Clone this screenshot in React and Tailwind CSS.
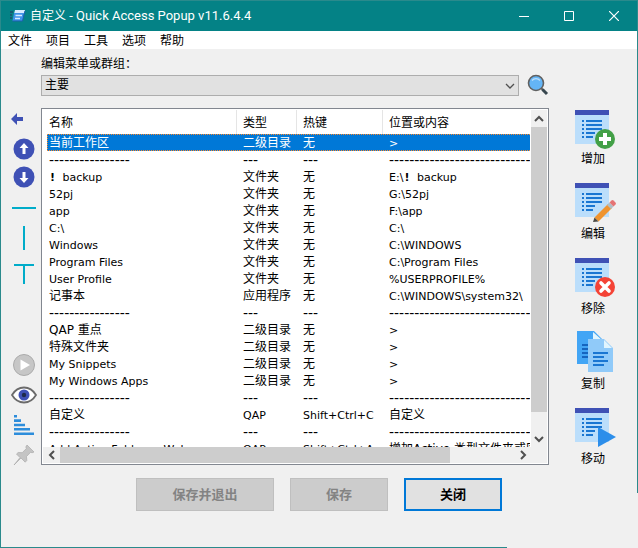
import React from "react";

const MENUS = ["文件", "项目", "工具", "选项", "帮助"];

const Mark = () => <b className="mr-1 pl-px">!</b>;

const DASH = { name: "-".repeat(16), type: "---", key: "---", place: "-".repeat(28), dash: true };

const ROWS = [
  { name: "当前工作区", type: "二级目录", key: "无", place: ">", selected: true },
  DASH,
  { name: <><Mark /> backup</>, type: "文件夹", key: "无", place: <>E:\<Mark /> backup</> },
  { name: "52pj", type: "文件夹", key: "无", place: "G:\\52pj" },
  { name: "app", type: "文件夹", key: "无", place: "F:\\app" },
  { name: "C:\\", type: "文件夹", key: "无", place: "C:\\" },
  { name: "Windows", type: "文件夹", key: "无", place: "C:\\WINDOWS" },
  { name: "Program Files", type: "文件夹", key: "无", place: "C:\\Program Files" },
  { name: "User Profile", type: "文件夹", key: "无", place: "%USERPROFILE%" },
  { name: "记事本", type: "应用程序", key: "无", place: "C:\\WINDOWS\\system32\\" },
  DASH,
  { name: "QAP 重点", type: "二级目录", key: "无", place: ">" },
  { name: "特殊文件夹", type: "二级目录", key: "无", place: ">" },
  { name: "My Snippets", type: "二级目录", key: "无", place: ">" },
  { name: "My Windows Apps", type: "二级目录", key: "无", place: ">" },
  DASH,
  { name: "自定义", type: "QAP", key: "Shift+Ctrl+C", place: "自定义" },
  DASH,
  { name: "Add Active Folder or Web", type: "QAP", key: "Shift+Ctrl+A", place: "增加Active 类型文件夹或区" },
];

function AppIcon() {
  return (
    <svg width="16" height="16" viewBox="0 0 16 16">
      <path d="M0 4h3M0 7h2M0 10h2" stroke="#1d4f6b" strokeWidth="1.500" />
      <path d="M5 2h10l-1 4H4z" fill="#d7ecff" />
      <path d="M4 5h10l-1.500 8H2.500z" fill="#3f93ea" />
      <path d="M5.500 7.500h6.500M5 10.500h5" stroke="#d5eaff" strokeWidth="1.400" />
      <path d="M2.500 13h10L15 3" fill="none" stroke="#1c5fae" />
    </svg>
  );
}

function SearchIcon() {
  return (
    <svg width="22" height="22" viewBox="0 0 22 22">
      <path d="M14 14l2 2" stroke="#616161" strokeWidth="2" />
      <path d="M15.5 15.5l4.5 4.5" stroke="#37474f" strokeWidth="3" />
      <circle cx="9" cy="9" r="7.5" fill="#64b5f6" stroke="#616161" strokeWidth="1.6" />
      <path d="M5 6.5c2-2.600 6-2.600 8 0" fill="none" stroke="#bbdefb" strokeWidth="1.3" />
    </svg>
  );
}

function Chevron({ d }) {
  return (
    <svg width="10" height="10" viewBox="0 0 10 10" fill="none" stroke="#505050" strokeWidth="2">
      <path d={d} />
    </svg>
  );
}

function SideButton({ label, className = "", children }) {
  return (
    <button aria-label={label} className={"flex w-[26px] items-center justify-center " + className}>
      {children}
    </button>
  );
}

function Sidebar() {
  return (
    <nav className="flex w-10 flex-col justify-between pl-[10px] pt-[63px]">
      <div className="flex flex-col">
        <SideButton label="返回" className="h-[14px]">
          <svg width="26" height="14" viewBox="0 0 26 14">
            <path d="M0 7l6-6v4h6v4H6v4z" fill="#3f51b5" />
          </svg>
        </SideButton>
        <SideButton label="上移" className="mt-3 h-[22px]">
          <svg width="22" height="22" viewBox="0 0 22 22">
            <circle cx="11" cy="11" r="10.5" fill="#3f51b5" />
            <path d="M11 5l4.500 5H12.500v6h-3v-6H6.500z" fill="#fff" />
          </svg>
        </SideButton>
        <SideButton label="下移" className="mt-[6px] h-[22px]">
          <svg width="22" height="22" viewBox="0 0 22 22">
            <circle cx="11" cy="11" r="10.5" fill="#3f51b5" />
            <path d="M11 17l4.500-5H12.500V6h-3v6H6.500z" fill="#fff" />
          </svg>
        </SideButton>
        <SideButton label="分隔线" className="mt-3 h-4">
          <svg width="24" height="2" viewBox="0 0 24 2">
            <path d="M0 1h24" stroke="#00acc9" strokeWidth="2" />
          </svg>
        </SideButton>
        <SideButton label="分栏" className="mt-[10px] h-6">
          <svg width="2" height="24" viewBox="0 0 2 24">
            <path d="M1 0v24" stroke="#00acc9" strokeWidth="2" />
          </svg>
        </SideButton>
        <SideButton label="文本分隔" className="mt-[14px] h-5">
          <svg width="20" height="20" viewBox="0 0 20 20">
            <path d="M0 1h20M10 1v19" stroke="#00acc9" strokeWidth="2" />
          </svg>
        </SideButton>
      </div>
      <div className="flex flex-col">
        <SideButton label="运行" className="h-[22px]">
          <svg width="22" height="22" viewBox="0 0 22 22">
            <circle cx="11" cy="11" r="10.500" fill="#c6c6c6" stroke="#aaa" />
            <path d="M7.500 5.500v11l9.500-5.500z" fill="#fff" />
          </svg>
        </SideButton>
        <SideButton label="显示" className="mt-[10px] h-[18px]">
          <svg width="26" height="18" viewBox="0 0 26 18">
            <path d="M1 9C7-1 19-1 25 9C19 19 7 19 1 9z" fill="#fff" stroke="#6b6b6b" strokeWidth="1.800" />
            <circle cx="13" cy="9" r="5.500" fill="#3f51b5" />
            <circle cx="13" cy="9" r="2.200" fill="#1e2a4a" />
          </svg>
        </SideButton>
        <SideButton label="排序" className="mt-[11px] h-5">
          <svg width="20" height="20" viewBox="0 0 20 20">
            <path d="M0 1.300h3M0 5.600h7M0 10h11M0 14.300h16M0 18.700h20" stroke="#2d8ddb" strokeWidth="2.600" />
          </svg>
        </SideButton>
        <SideButton label="置顶" className="mt-[10px] h-5">
          <svg width="22" height="20" viewBox="0 0 22 20">
            <path d="M14 0l7 7-2 .8-1.300-.6-4.200 4.300.3 4-1.600 1.700-4.200-4.200L1 20l6-7.400L3.500 9l1.700-1.500 4 .2 4.200-4.200L12.800 2z" fill="#c4c4c4" stroke="#aaa" strokeWidth=".7" />
          </svg>
        </SideButton>
      </div>
    </nav>
  );
}

function ListPage() {
  return (
    <>
      <rect width="34" height="34" fill="#bbdefb" />
      <rect width="34" height="5" fill="#3f51b5" />
      <path
        d="M7 11h2M11 11h16M7 15h2M11 15h16M7 19h2M11 19h16M7 23h2M11 23h9M7 27h2M11 27h7"
        stroke="#1976d2"
        strokeWidth="2"
      />
    </>
  );
}

const ACTIONS = [
  {
    label: "增加",
    art: (
      <g transform="translate(0 2)">
        <ListPage />
        <circle cx="30" cy="29" r="10" fill="#43a047" />
        <path d="M30 23v12M24 29h12" stroke="#fff" strokeWidth="4" />
      </g>
    ),
  },
  {
    label: "编辑",
    art: (
      <g>
        <ListPage />
        <path d="M19.500 34.500L33 21l4 4L23.500 38.500z" fill="#ef9430" />
        <path d="M19.500 34.500l4 4L18 39z" fill="#4b4a45" />
        <path d="M32 22l2.500-2.500 4 4L36 26z" fill="#b0bec5" />
        <path d="M34.500 19.500l2-2q1-1 2 0l2 2q1 1 0 2l-2 2z" fill="#e57373" />
      </g>
    ),
  },
  {
    label: "移除",
    art: (
      <g>
        <ListPage />
        <circle cx="30" cy="29" r="10" fill="#f44336" />
        <path d="M26 25l8 8M34 25l-8 8" stroke="#fff" strokeWidth="3.600" strokeLinecap="round" />
      </g>
    ),
  },
  {
    label: "复制",
    art: (
      <g transform="translate(2 -2)">
        <path d="M0 0h17l8 8v25H0z" fill="#42a5f5" />
        <path d="M16 1v8h9z" fill="#e1f5fe" />
        <path d="M5 14h8M5 18h8M5 22h8M5 26h8" stroke="#1565c0" strokeWidth="2" />
        <path d="M11 8h16l9 9v24H11z" fill="#90caf9" />
        <path d="M27 9v8h8z" fill="#e1f5fe" />
        <path d="M16 22h15M16 26h11M16 30h15M16 34h11" stroke="#1976d2" strokeWidth="2" />
      </g>
    ),
  },
  {
    label: "移动",
    art: (
      <g>
        <ListPage />
        <path d="M23 19v20l18-10z" fill="#2c8eea" />
      </g>
    ),
  },
];

function Actions() {
  return (
    <aside className="flex w-[88px] flex-col pl-[26px] pt-[59px]">
      {ACTIONS.map((a) => (
        <button key={a.label} className="flex h-[75px] w-9 shrink-0 flex-col items-center">
          <svg width="36" height="40" viewBox="0 0 36 40" className="shrink-0 overflow-visible">
            {a.art}
          </svg>
          <span className="mt-[3px] leading-4">{a.label}</span>
        </button>
      ))}
    </aside>
  );
}

const CJK = /[\u4e00-\u9fff]/;

function Cell({ pad, children }) {
  const size = typeof children === "string" && CJK.test(children) ? "text-xs leading-[15px]" : "leading-[15px]";
  return <td className={"overflow-hidden pb-0 pr-0 pt-[2px] " + pad + " " + size}>{children}</td>;
}

function ItemTable() {
  return (
    <div className="mr-px min-h-0 min-w-0 overflow-hidden pl-1">
      <table className="w-[calc(100%+40px)] table-fixed border-separate border-spacing-0 whitespace-nowrap text-left">
        <colgroup>
          <col className="w-[190px]" />
          <col className="w-[60px]" />
          <col className="w-[86px]" />
          <col />
        </colgroup>
        <thead className="text-xs">
          <tr className="h-6">
            <th className="border-r border-[#e5e5e5] p-0 pl-[2px] pt-[2px] font-normal">名称</th>
            <th className="border-r border-[#e5e5e5] p-0 pl-[6px] pt-[2px] font-normal">类型</th>
            <th className="border-r border-[#e5e5e5] p-0 pl-[6px] pt-[2px] font-normal">热键</th>
            <th className="p-0 pl-[6px] pt-[2px] font-normal">位置或内容</th>
          </tr>
        </thead>
        <tbody>
          {ROWS.map((r, i) => (
            <tr
              key={i}
              className={
                r.selected
                  ? "h-[17px] bg-[#0078d7] text-white outline outline-1 outline-dotted -outline-offset-1 outline-[#ff8728]"
                  : r.dash
                  ? "h-[17px] text-sm"
                  : "h-[17px]"
              }
            >
              <Cell pad="pl-[2px]">{r.name}</Cell>
              <Cell pad="pl-[6px]">{r.type}</Cell>
              <Cell pad="pl-[6px]">{r.key}</Cell>
              <Cell pad="pl-[6px]">{r.place}</Cell>
            </tr>
          ))}
        </tbody>
      </table>
    </div>
  );
}

function ListPanel() {
  return (
    <section className="mt-3 grid min-h-0 flex-1 grid-cols-[minmax(0,1fr)_16px] grid-rows-[minmax(0,1fr)_16px] border border-[#828790] bg-white p-px">
      <ItemTable />
      <div className="flex flex-col bg-[#f0f0f0]">
        <button aria-label="向上滚动" className="flex h-[17px] items-center justify-center">
          <Chevron d="M1 7l4-4 4 4" />
        </button>
        <div className="flex flex-1 flex-col">
          <div className="basis-[94%] bg-[#cdcdcd]" />
        </div>
        <button aria-label="向下滚动" className="flex h-[17px] items-center justify-center">
          <Chevron d="M1 3l4 4 4-4" />
        </button>
      </div>
      <div className="flex bg-[#f0f0f0]">
        <button aria-label="向左滚动" className="flex w-[17px] items-center justify-center">
          <Chevron d="M7 1L3 5l4 4" />
        </button>
        <div className="flex flex-1">
          <div className="basis-[86%] bg-[#cdcdcd]" />
        </div>
        <button aria-label="向右滚动" className="flex w-[17px] items-center justify-center">
          <Chevron d="M3 1l4 4-4 4" />
        </button>
      </div>
      <div className="bg-[#f0f0f0]" />
    </section>
  );
}

export default function App() {
  return (
    <div className="relative flex h-screen flex-col border border-[#2a8a8c] bg-[#f0f0f0] font-['DejaVu_Sans','Noto_Sans_CJK_SC',sans-serif] text-[11px] text-black">
      <header className="flex h-[30px] shrink-0 items-center bg-[#048286] pl-[9px] font-['Roboto','Noto_Sans_CJK_SC',sans-serif] text-white">
        <AppIcon />
        <h1 className="ml-1 flex-1 text-[13px]">
          <span className="text-xs">自定义</span> - Quick Access Popup v11.6.4.4
        </h1>
        <button aria-label="最小化" className="flex w-[45px] justify-center">
          <svg width="10" height="10" viewBox="0 0 10 10" stroke="#fff"><path d="M0 5.500h10" /></svg>
        </button>
        <button aria-label="最大化" className="flex w-[45px] justify-center">
          <svg width="10" height="10" viewBox="0 0 10 10" stroke="#fff" fill="none"><path d="M.5.5h9v9h-9z" /></svg>
        </button>
        <button aria-label="关闭窗口" className="flex w-[46px] justify-center">
          <svg width="10" height="10" viewBox="0 0 10 10" stroke="#fff" strokeWidth="1.200"><path d="M0 0l10 10M10 0L0 10" /></svg>
        </button>
      </header>
      <nav className="flex h-[18px] shrink-0 items-center gap-[14px] bg-white pl-[7px] text-xs">
        {MENUS.map((m) => (
          <button key={m} className="pt-[2px] leading-4">{m}</button>
        ))}
      </nav>
      <div className="flex min-h-0 flex-1 text-xs">
        <Sidebar />
        <main className="flex min-w-0 flex-1 flex-col pt-[7px] text-[11px]">
          <label htmlFor="menu" className="text-xs leading-4">编辑菜单或群组：</label>
          <div className="mt-[2px] flex items-center gap-2">
            <div className="relative flex-1">
              <select id="menu" className="block h-[21px] w-full appearance-none border border-[#adadad] bg-[#e1e1e1] px-[3px] text-xs leading-4">
                <option>主要</option>
              </select>
              <svg className="pointer-events-none absolute right-1 top-[6px]" width="10" height="10" viewBox="0 0 10 10" fill="none" stroke="#505050" strokeWidth="1.300">
                <path d="M1 3l4 4 4-4" />
              </svg>
            </div>
            <button aria-label="搜索"><SearchIcon /></button>
          </div>
          <ListPanel />
        </main>
        <Actions />
      </div>
      <footer className="flex h-[82px] shrink-0 justify-center gap-4 pt-[13px] text-[13px] font-bold">
        <button disabled className="h-[33px] w-[138px] border border-[#bfbfbf] bg-[#cccccc] text-[#838383]">保存并退出</button>
        <button disabled className="h-[33px] w-[98px] border border-[#bfbfbf] bg-[#cccccc] text-[#838383]">保存</button>
        <button className="h-[33px] w-[98px] border-2 border-[#0078d7] bg-[#e1e1e1]">关闭</button>
      </footer>
      <div className="absolute -bottom-px -right-px h-[55px] w-[131px] bg-[#f0f0f0]" />
    </div>
  );
}
